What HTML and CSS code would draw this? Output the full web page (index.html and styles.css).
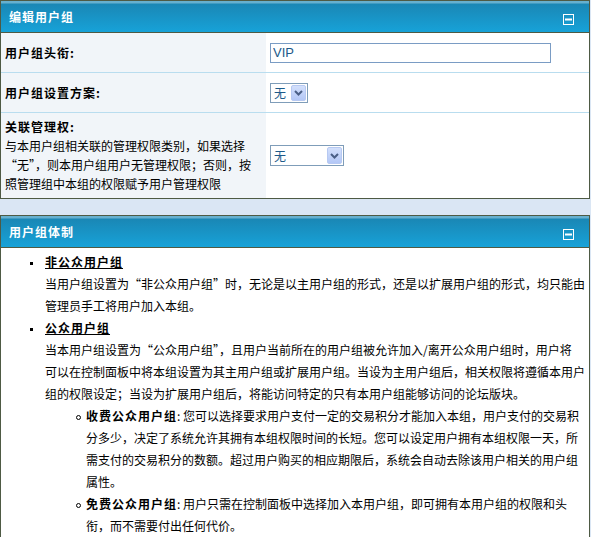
FILE: index.html
```html
<!DOCTYPE html>
<html lang="zh-CN">
<head>
<meta charset="utf-8">
<title>编辑用户组</title>
<link rel="stylesheet" href="styles.css">
</head>
<body>
<div class="panel">
  <div class="hd">
    <span class="title">编辑用户组</span>
    <span class="toggle"><svg width="11" height="11" viewBox="0 0 11 11"><rect x="0.5" y="0.5" width="10" height="10" fill="none" stroke="#fff" stroke-width="1"/><rect x="2" y="4.5" width="7" height="2" fill="#fff"/></svg></span>
  </div>
  <div class="row r1">
    <div class="lbl"><span class="strong">用户组头衔:</span></div>
    <div class="val"><input class="txt" type="text" value="VIP"></div>
  </div>
  <div class="row r2">
    <div class="lbl"><span class="strong">用户组设置方案:</span></div>
    <div class="val">
      <span class="sel sel-s"><select><option>无</option></select><span class="btn"><svg width="9" height="6" viewBox="0 0 9 6"><path d="M1 1 L4.5 4.5 L8 1" fill="none" stroke="#4a5f86" stroke-width="2"/></svg></span></span>
    </div>
  </div>
  <div class="row r3">
    <div class="lbl lbl-block"><span class="strong">关联管理权:</span><br>与本用户组相关联的管理权限类别，如果选择“无”，则本用户组用户无管理权限；否则，按照管理组中本组的权限赋予用户管理权限</div>
    <div class="val">
      <span class="sel sel-l"><select><option>无</option></select><span class="btn"><svg width="9" height="6" viewBox="0 0 9 6"><path d="M1 1 L4.5 4.5 L8 1" fill="none" stroke="#4a5f86" stroke-width="2"/></svg></span></span>
    </div>
  </div>
</div>

<div class="panel">
  <div class="hd">
    <span class="title">用户组体制</span>
    <span class="toggle"><svg width="11" height="11" viewBox="0 0 11 11"><rect x="0.5" y="0.5" width="10" height="10" fill="none" stroke="#fff" stroke-width="1"/><rect x="2" y="4.5" width="7" height="2" fill="#fff"/></svg></span>
  </div>
  <div class="bd">
    <ul class="lv1">
      <li><span class="term">非公众用户组</span><br>当用户组设置为“非公众用户组”时，无论是以主用户组的形式，还是以扩展用户组的形式，均只能由管理员手工将用户加入本组。</li>
      <li><span class="term">公众用户组</span><br>当本用户组设置为“公众用户组”，且用户当前所在的用户组被允许加入/离开公众用户组时，用户将<br>可以在控制面板中将本组设置为其主用户组或扩展用户组。当设为主用户组后，相关权限将遵循本用户组的权限设定；当设为扩展用户组后，将能访问特定的只有本用户组能够访问的论坛版块。
        <ul class="lv2">
          <li><span class="strong">收费公众用户组</span>: 您可以选择要求用户支付一定的交易积分才能加入本组，用户支付的交易积分多少，决定了系统允许其拥有本组权限时间的长短。您可以设定用户拥有本组权限一天，所需支付的交易积分的数额。超过用户购买的相应期限后，系统会自动去除该用户相关的用户组属性。</li>
          <li><span class="strong">免费公众用户组</span>: 用户只需在控制面板中选择加入本用户组，即可拥有本用户组的权限和头衔，而不需要付出任何代价。</li>
        </ul>
      </li>
    </ul>
  </div>
</div>
</body>
</html>
```

FILE: styles.css
```css
body {
  margin: 0;
  background: #dae6f4;
  font: 12px "Noto Sans CJK SC", "Liberation Sans", sans-serif;
  color: #000;
}

.panel {
  width: 590px;
  box-sizing: border-box;
  border: 1px solid #4e5a44;
  background: #fff;
}

.panel + .panel {
  margin-top: 16px;
}

.hd {
  height: 31px;
  border-bottom: 1px solid #4e5a44;
  background: linear-gradient(#66b0cf 0, #66b0cf 2px, #1a87b5 3px, #17a2d8 100%);
  display: flex;
  align-items: center;
  justify-content: space-between;
  padding: 0 15px 0 8px;
  color: #fff;
}

.title {
  font-weight: bold;
  letter-spacing: 1px;
  line-height: 16px;
}

.toggle {
  display: flex;
  margin-top: 6px;
}

.row {
  display: flex;
  border-bottom: 1px solid #b9ddef;
}

.row:last-child {
  border-bottom: 0;
}

.r1, .r2 {
  height: 39px;
}

.r3 {
  height: 85px;
}

.lbl {
  width: 265px;
  flex: none;
  box-sizing: border-box;
  background: #f1f5f9;
  padding: 0 4px;
  display: flex;
  align-items: center;
}

.lbl-block {
  display: block;
  padding: 4px 4px 5px;
  line-height: 19px;
}

.strong {
  font-weight: bold;
  letter-spacing: 1px;
}

.val {
  flex: 1;
  display: flex;
  align-items: center;
  padding-left: 4px;
}

.txt {
  width: 281px;
  height: 20px;
  box-sizing: border-box;
  margin: 0;
  border: 1px solid #7a9cc4;
  padding: 0 2px;
  font: 13px "Liberation Sans", sans-serif;
  color: #1d5a8a;
  outline: none;
}

.sel {
  position: relative;
  display: inline-block;
  line-height: 0;
}

.sel select {
  appearance: none;
  -webkit-appearance: none;
  margin: 0;
  border: 1px solid #7f9db9;
  border-radius: 0;
  background: #fff;
  color: #1d5a8a;
  font: 12px "Noto Sans CJK SC", sans-serif;
  padding: 0 0 0 3px;
  box-sizing: border-box;
  outline: none;
}

.sel-s select {
  width: 38px;
  height: 20px;
}

.sel-l select {
  width: 74px;
  height: 21px;
}

.btn {
  position: absolute;
  top: 2px;
  bottom: 2px;
  right: 2px;
  width: 15px;
  box-sizing: border-box;
  border: 1px solid #b7c9f2;
  border-radius: 2px;
  background: linear-gradient(#d3e0fc, #b3c7f6);
  display: flex;
  align-items: center;
  justify-content: center;
  pointer-events: none;
}

.bd {
  padding: 3px 3px 0 4px;
}

.bd ul {
  margin: 0;
  list-style: none;
  line-height: 22px;
}

.lv1 {
  padding: 0 0 0 40px;
}

.lv2 {
  padding: 0 0 0 41px;
}

.lv1 > li::before {
  content: "";
  display: inline-block;
  width: 3px;
  height: 3px;
  background: #000;
  margin-left: -15px;
  margin-right: 12px;
  vertical-align: middle;
}

.lv2 > li::before {
  content: "";
  display: inline-block;
  width: 5px;
  height: 5px;
  box-sizing: border-box;
  border: 1px solid #000;
  border-radius: 50%;
  margin-left: -10px;
  margin-right: 5px;
  vertical-align: middle;
}

.term {
  font-weight: bold;
  letter-spacing: 1px;
  text-decoration: underline;
}
```
